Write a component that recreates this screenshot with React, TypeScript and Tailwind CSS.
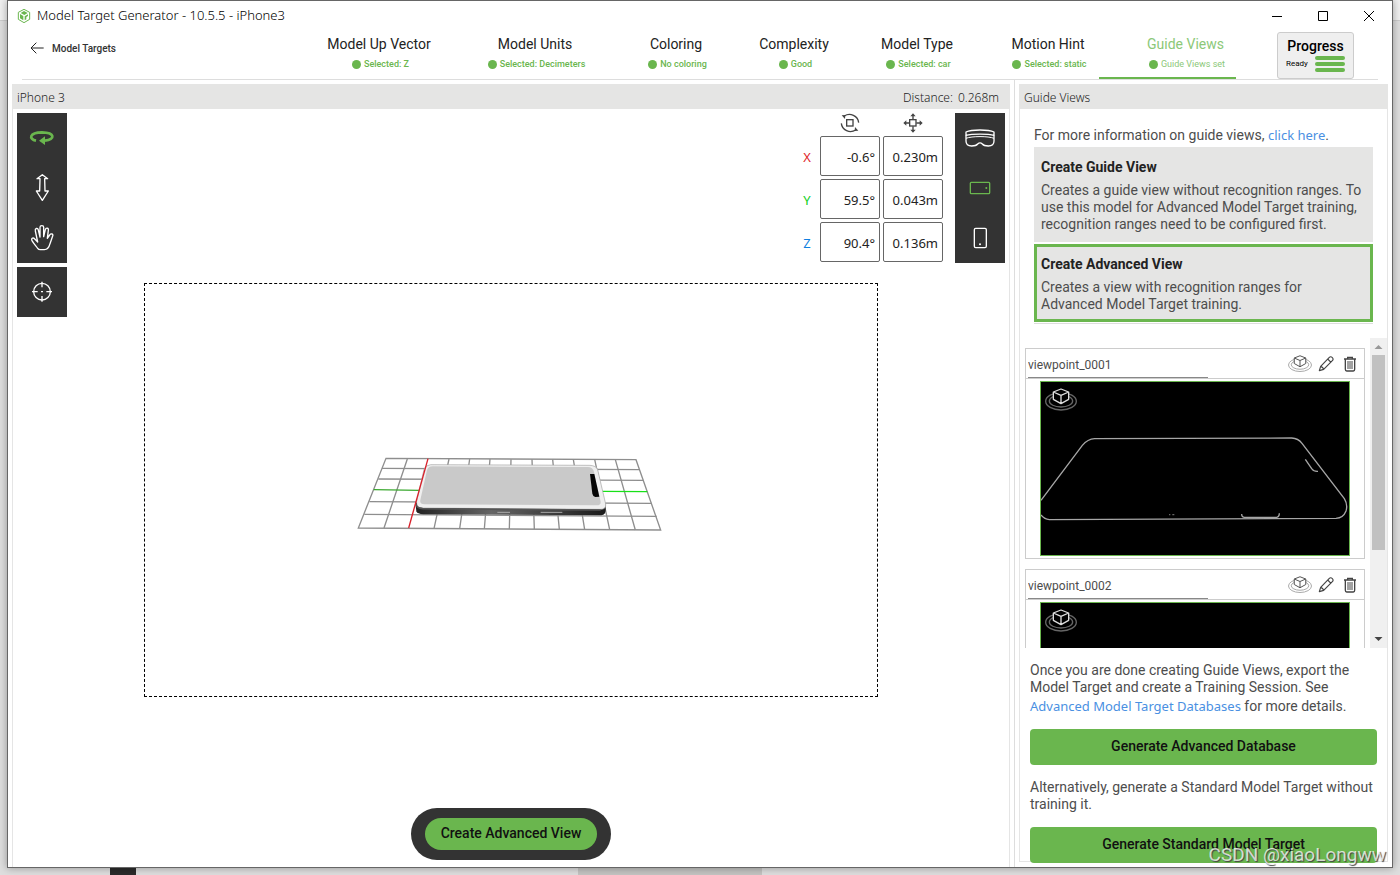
import React, { useState } from 'react';

type Tab = { label: string; status: string; className: string };

const tabs: Tab[] = [
  { label: 'Model Up Vector', status: 'Selected: Z', className: 'w-[180px]' },
  { label: 'Model Units', status: 'Selected: Decimeters', className: 'w-[132px]' },
  { label: 'Coloring', status: 'No coloring', className: 'w-[150px]' },
  { label: 'Complexity', status: 'Good', className: 'w-[86px]' },
  { label: 'Model Type', status: 'Selected: car', className: 'w-[160px]' },
  { label: 'Motion Hint', status: 'Selected: static', className: 'w-[102px]' },
  { label: 'Guide Views', status: 'Guide Views set', className: 'w-[137px] pl-9' },
];

const axes = [
  { name: 'X', color: 'text-[#e0262b]', rotation: '-0.6°', position: '0.230m' },
  { name: 'Y', color: 'text-[#12d01c]', rotation: '59.5°', position: '0.043m' },
  { name: 'Z', color: 'text-[#0f7fe0]', rotation: '90.4°', position: '0.136m' },
];

const LogoIcon = () => (
  <svg viewBox="0 0 48 48" className="size-4" aria-hidden="true">
    <path d="M24 4 L41 13 V34 L24 44 L7 34 V13 Z" fill="#fff" stroke="#6ab64e" strokeWidth="3" />
    <path d="M24 9 L35 15 L25 21 L14 15 Z M12 18 L22 24 V37 L12 31 Z" fill="#6ab64e" />
    <path d="M26 25 L36 19 V24 L31 27 V34 L26 37 Z" fill="#6ab64e" />
  </svg>
);

const OrbitIcon = () => (
  <svg viewBox="0 0 150 150" className="size-[50px]" fill="none" stroke="#6ab64e" strokeWidth="8" aria-hidden="true">
    <path d="M57 83 C35 78 36 59 75 58 C114 59 116 79 84 83" />
    <path d="M66 83 L84 70 V96 Z" fill="#6ab64e" stroke="none" />
  </svg>
);

const ElevateIcon = () => (
  <svg viewBox="0 0 150 150" className="size-[50px]" fill="none" stroke="#fff" strokeWidth="4" strokeLinejoin="round" aria-hidden="true">
    <path d="M76 35 L92 47 H83 L84 84 H94 L76 112 L58 84 H68 L69 47 H60 Z" />
  </svg>
);

const PanIcon = () => (
  <svg viewBox="0 0 150 150" className="size-[50px]" fill="none" stroke="#fff" strokeWidth="4" strokeLinejoin="round" aria-hidden="true">
    <path d="M62 106 C56 98 50 92 45 83 C41 75 50 72 54 79 L62 87 L55 54 C53 46 62 43 64 51 L69 72 L69 43 C69 36 80 36 80 43 L80 71 L85 50 C87 43 96 45 94 52 L91 76 L98 66 C102 60 110 63 107 69 L99 92 C96 104 92 110 82 110 H70 C66 110 64 109 62 106 Z" />
  </svg>
);

const TargetIcon = () => (
  <svg viewBox="0 0 150 150" className="size-[50px]" fill="none" stroke="#fff" strokeWidth="4" aria-hidden="true">
    <circle cx="75" cy="74" r="25" />
    <path d="M75 44 V61 M75 87 V104 M45 74 H62 M88 74 H105 M72 74 H78" />
  </svg>
);

const GogglesIcon = () => (
  <svg viewBox="0 0 150 150" className="size-[50px]" fill="none" stroke="#fff" strokeWidth="4" strokeLinejoin="round" aria-hidden="true">
    <path d="M33 57 C50 49 100 49 117 57 V67 C100 62 50 62 33 67 Z" />
    <path d="M33 67 V84 C33 94 38 99 50 99 C60 99 65 97 68 93 C72 89 78 89 82 93 C85 97 90 99 100 99 C112 99 117 94 117 84 V67" />
    <path d="M33 76 C50 69 100 69 117 76" strokeWidth="3" />
  </svg>
);

const LandscapeIcon = () => (
  <svg viewBox="0 0 150 150" className="size-[50px]" fill="none" stroke="#6ab64e" strokeWidth="4" aria-hidden="true">
    <rect x="46" y="58" width="58" height="34" rx="3" />
    <circle cx="94" cy="75" r="3" fill="#6ab64e" stroke="none" />
  </svg>
);

const PortraitIcon = () => (
  <svg viewBox="0 0 150 150" className="size-[50px]" fill="none" stroke="#fff" strokeWidth="4" aria-hidden="true">
    <rect x="58" y="46" width="36" height="58" rx="4" />
    <circle cx="75" cy="94" r="3" fill="#fff" stroke="none" />
  </svg>
);

const RotationIcon = () => (
  <svg viewBox="0 0 60 60" className="size-5" fill="none" stroke="#444" strokeWidth="4" aria-hidden="true">
    <rect x="20" y="20" width="19" height="19" />
    <path d="M13 9 C30 -2 54 8 56 29 M47 51 C30 62 6 52 4 31" />
    <path d="M5 7 L16 6 L15 18 Z M55 53 L44 54 L45 42 Z" fill="#444" stroke="none" />
  </svg>
);

const PositionIcon = () => (
  <svg viewBox="0 0 60 60" className="size-5" fill="none" stroke="#444" strokeWidth="4" aria-hidden="true">
    <rect x="20" y="20" width="19" height="19" />
    <path d="M30 8 V20 M30 40 V52 M8 30 H20 M40 30 H52" />
    <path d="M30 1 L38 10 H22 Z M30 59 L38 50 H22 Z M1 30 L10 22 V38 Z M59 30 L50 22 V38 Z" fill="#444" stroke="none" />
  </svg>
);

const GuideCubeIcon = ({ className, stroke, ring }: { className: string; stroke: string; ring: string }) => (
  <svg viewBox="0 0 96 68" className={className} fill="none" aria-hidden="true">
    <ellipse cx="48" cy="40" rx="46" ry="26" stroke={ring} strokeWidth="4" />
    <ellipse cx="48" cy="39" rx="35" ry="18" stroke={ring} strokeWidth="4" />
    <path d="M48 3 L71 12 V34 L48 47 L25 34 V12 Z" fill="var(--cube-fill)" />
    <path d="M48 3 L71 12 V34 L48 47 L25 34 V12 Z M25 12 L48 22 L71 12 M48 22 V47" stroke={stroke} strokeWidth="4" strokeLinejoin="round" />
  </svg>
);

const PencilIcon = () => (
  <svg viewBox="0 0 48 48" className="size-4" fill="none" stroke="#444" strokeWidth="3.5" strokeLinejoin="round" aria-hidden="true">
    <path d="M4 44 L8 31 L34 4 C37 1 41 2 43 5 C46 8 46 11 43 14 L17 40 Z M29 9 L39 19 M8 31 C12 32 16 36 17 40" />
  </svg>
);

const TrashIcon = () => (
  <svg viewBox="0 0 48 48" className="size-4" fill="none" stroke="#444" strokeWidth="4" aria-hidden="true">
    <path d="M6 9 H42 M10 9 V40 C10 43 11 45 14 45 H34 C37 45 38 43 38 40 V9 M17 8 V4 H31 V8" />
    <path d="M18 15 V39 M24 15 V39 M30 15 V39" strokeWidth="3" />
  </svg>
);

const PhoneModel = () => (
  <svg viewBox="3 -15 1020 330" className="w-[340px]" role="img" aria-label="iPhone 3 model">
    <defs>
      <linearGradient id="edge" x1="0" x2="1" y1="0" y2="0">
        <stop offset="0" stopColor="#222" />
        <stop offset="0.4" stopColor="#666" />
        <stop offset="1" stopColor="#1a1a1a" />
      </linearGradient>
    </defs>
    <g stroke="#8e8e8e" strokeWidth="4" fill="none">
      <path d="M138 55 L888 59 L962 270 L55 264 Z" />
      <path d="M126 85 L900 89 M115 117 L910 121 M88 185 L935 190 M73 223 L950 229" />
      <path d="M202 57 L132 264 M327 57 L282 266 M389 57 L359 266 M450 57 L433 267 M513 58 L508 267 M576 58 L583 268 M638 58 L658 268 M700 58 L734 269 M764 58 L809 269 M826 59 L886 270" />
    </g>
    <path d="M101 149 L240 151" stroke="#3aa82f" strokeWidth="4" />
    <path d="M786 154 L922 155" stroke="#18e018" strokeWidth="4" />
    <path d="M226 190 L229 214 Q232 222 250 223 L784 226 Q797 224 797 210 L796 190 Z" fill="url(#edge)" />
    <path d="M272 74 L750 76 Q768 77 773 89 L797 192 Q799 208 782 208 L248 204 Q226 204 229 188 L252 88 Q256 75 272 74 Z" fill="#efefef" stroke="#a5a5a5" strokeWidth="2" />
    <path d="M229 188 Q226 204 248 206 L782 210" fill="none" stroke="#555" strokeWidth="5" />
    <path d="M278 79 L744 81 Q757 82 761 92 L782 185 Q783 196 770 196 L254 193 Q238 192 241 180 L261 90 Q264 80 278 79 Z" fill="#c9c9c9" />
    <path d="M750 102 H763 L778 170 L766 171 Q759 170 757 161 Z" fill="#050505" />
    <path d="M472 217 H510 M602 217 H667" stroke="#aaa" strokeWidth="3" />
    <path d="M264 56 L206 264" stroke="#d8202a" strokeWidth="4" />
  </svg>
);

const PhoneOutline = () => (
  <svg viewBox="93 156 924 519" className="block w-full" fill="none" stroke="#a6a6a6" strokeWidth="4" aria-hidden="true">
    <path d="M93 511 L217 346 Q233 327 254 326 L845 324 Q865 325 876 340 L1003 506 Q1014 524 1008 543 Q1000 564 978 565 L118 569 Q102 567 93 555" />
    <path d="M886 388 L906 417 Q911 425 924 424 M695 552 Q695 562 704 562 L800 562 Q808 561 808 550" />
    <path d="M477 554 H481 M487 554 H493" stroke="#666" />
  </svg>
);

const ViewCard = ({ name }: { name: string }) => {
  const [value, setValue] = useState(name);

  return (
    <article className="shrink-0 border border-[#ccc] bg-white">
      <div className="flex h-[30px] items-center justify-between border-b border-[#ccc] pr-1.5 pl-0.5">
        <input
          aria-label="View name"
          value={value}
          onChange={e => setValue(e.target.value)}
          className="h-[29px] w-[180px] border-b border-[#888] pt-1 text-xs text-[#4d4d4d] outline-none"
        />
        <div className="flex items-center gap-2">
          <button aria-label="Show view" className="[--cube-fill:#fff]">
            <GuideCubeIcon className="w-6" stroke="#555" ring="#aaa" />
          </button>
          <button aria-label="Edit view" className="-ml-0.5"><PencilIcon /></button>
          <button aria-label="Delete view"><TrashIcon /></button>
        </div>
      </div>
      <div className="relative mx-3.5 mt-0.5 mb-0.5 border border-[#6ab64e] bg-black">
        <PhoneOutline />
        <div className="absolute top-1.5 left-1 [--cube-fill:#000]">
          <GuideCubeIcon className="w-8" stroke="#ddd" ring="#666" />
        </div>
      </div>
    </article>
  );
};

const TitleBar = () => (
  <header className="flex h-[29px] shrink-0 items-center pl-2">
    <LogoIcon />
    <h1 className="ml-[5px] font-['Noto_Sans',sans-serif] text-[13px] font-light text-black">Model Target Generator - 10.5.5 - iPhone3</h1>
    <div className="ml-auto flex h-full items-center">
      <button aria-label="Minimize" className="flex h-full w-[46px] items-center justify-center">
        <svg viewBox="0 0 10 10" className="size-2.5" stroke="#000"><path d="M0 5.5 H10" /></svg>
      </button>
      <button aria-label="Maximize" className="flex h-full w-[46px] items-center justify-center">
        <svg viewBox="0 0 10 10" className="size-2.5" stroke="#000" fill="none"><path d="M.5 .5 H9.500 V9.500 H.5 Z" /></svg>
      </button>
      <button aria-label="Close" className="flex h-full w-[46px] items-center justify-center">
        <svg viewBox="0 0 10 10" className="size-2.5" stroke="#000"><path d="M0 0 L10 10 M10 0 L0 10" /></svg>
      </button>
    </div>
  </header>
);

const StepBar = () => (
  <div className="mr-3.5 ml-3.5 flex h-[50px] shrink-0 items-stretch border-b border-[#ddd]">
    <button className="flex h-9 items-center gap-2 pl-2 text-[10px] font-medium text-[#333]">
      <svg viewBox="0 0 42 36" className="w-3.5" fill="none" stroke="#222" strokeWidth="3" aria-hidden="true">
        <path d="M41 18 H4 M19 2 L3 18 L19 34" />
      </svg>
      Model Targets
    </button>
    <nav className="ml-auto flex" aria-label="Steps">
      {tabs.map((tab, i) => {
        const active = i === tabs.length - 1;
        return (
          <button
            key={tab.label}
            className={`${tab.className} flex shrink-0 flex-col items-center border-b-2 pt-1 whitespace-nowrap ${active ? 'border-[#6ab64e]' : 'border-transparent'}`}
          >
            <span className={`text-sm leading-5 ${active ? 'text-[#8cc878]' : 'text-[#222]'}`}>{tab.label}</span>
            <span className={`mt-0.5 flex items-center gap-[3px] pl-[3px] text-[9px] leading-4 ${active ? 'text-[#8cc878]' : 'font-medium text-[#6ab64e]'}`}>
              <i className="size-[9px] rounded-full bg-[#6ab64e]" />
              {tab.status}
            </span>
          </button>
        );
      })}
    </nav>
    <button className="mr-6 ml-[41px] h-[47px] w-[77px] self-end rounded-[3px] border border-[#ccc] bg-[#efefef] px-2 pb-1 text-black">
      <span className="block text-sm leading-5 font-medium">Progress</span>
      <span className="flex items-center justify-between text-[8px]">
        Ready
        <span className="flex w-[30px] flex-col gap-0.5">
          <i className="h-1 rounded-full bg-[#6ab64e]" />
          <i className="h-1 rounded-full bg-[#6ab64e]" />
          <i className="h-1 rounded-full bg-[#6ab64e]" />
        </span>
      </span>
    </button>
  </div>
);

const Viewport = () => (
  <section className="mt-1 mr-1 ml-1 flex min-w-0 flex-1 flex-col">
    <div className="flex h-[25px] shrink-0 items-center justify-between bg-[#e5e5e4] pt-0.5 pr-[11px] pl-[5px] font-['Noto_Sans',sans-serif] text-xs font-light text-[#222]">
      <h2>iPhone 3</h2>
      <p className="flex gap-[5px]"><span>Distance:</span><span>0.268m</span></p>
    </div>
    <div className="relative flex flex-1 items-center border-x border-[#e5e5e5] pt-1">
      <div className="mx-[131px] flex aspect-[734/414] flex-1 items-center justify-center border border-dashed border-black">
        <PhoneModel />
      </div>

      <div className="absolute top-1 left-1 flex flex-col gap-1">
        <div className="flex flex-col bg-[#333]">
          <button aria-label="Orbit"><OrbitIcon /></button>
          <button aria-label="Elevate"><ElevateIcon /></button>
          <button aria-label="Pan"><PanIcon /></button>
        </div>
        <button aria-label="Center model" className="bg-[#333]"><TargetIcon /></button>
      </div>

      <div className="absolute top-1 right-1 flex items-start gap-3">
        <div className="grid grid-cols-[20px_60px_60px] items-center gap-[3px] font-['Noto_Sans',sans-serif] text-[13px]">
          <span />
          <span className="flex justify-center"><RotationIcon /></span>
          <span className="flex justify-center"><PositionIcon /></span>
          {axes.map(axis => (
            <React.Fragment key={axis.name}>
              <span className={`pt-1 text-center ${axis.color}`}>{axis.name}</span>
              <input
                aria-label={`${axis.name} rotation`}
                defaultValue={axis.rotation}
                className="h-10 w-full rounded-xs border border-[#666] bg-white px-1 pt-0.5 text-right text-[#222]"
              />
              <input
                aria-label={`${axis.name} position`}
                defaultValue={axis.position}
                className="h-10 w-full rounded-xs border border-[#666] bg-white px-1 pt-0.5 text-right text-[#222]"
              />
            </React.Fragment>
          ))}
        </div>
        <div className="flex flex-col bg-[#333]">
          <button aria-label="Headset"><GogglesIcon /></button>
          <button aria-label="Landscape device"><LandscapeIcon /></button>
          <button aria-label="Portrait device"><PortraitIcon /></button>
        </div>
      </div>

      <div className="absolute inset-x-0 bottom-[7px] flex justify-center">
        <div className="rounded-full bg-[#333] px-3.5 py-2.5">
          <button className="h-8 w-[172px] rounded-full bg-[#6ab64e] pb-0.5 text-sm font-medium text-[#111]">Create Advanced View</button>
        </div>
      </div>
    </div>
  </section>
);

const GuidePanel = () => (
  <aside className="flex w-[378px] shrink-0 flex-col border-l border-[#ddd] pt-1 pr-1 pb-[5px] pl-1">
    <h2 className="flex h-[25px] shrink-0 items-center bg-[#e5e5e4] pt-0.5 pl-[5px] font-['Noto_Sans',sans-serif] text-xs font-light text-[#222]">Guide Views</h2>
    <div className="flex min-h-0 flex-1 flex-col border-x border-b border-[#e5e5e5] text-sm leading-[17px] text-[#4d4d4d]">
      <div className="mr-3.5 ml-3.5 pt-4">
        <p className="pb-0.5 leading-5">
          For more information on guide views,{' '}
          <a href="#guide-views" className="font-['Noto_Sans',sans-serif] text-[13px] text-[#4a90e2]">click here</a>.
        </p>
        <div className="flex flex-col gap-0.5 border-b border-[#ddd] pb-px">
          <button className="border-3 border-[#e5e5e4] bg-[#e5e5e4] px-1 pt-[7px] pb-1.5 text-left">
            <b className="mb-[5px] block leading-5 text-[#222]">Create Guide View</b>
            Creates a guide view without recognition ranges. To use this model for Advanced Model Target training, recognition ranges need to be configured first.
          </button>
          <button className="border-3 border-[#6ab64e] bg-[#e5e5e4] px-1 pt-[7px] pb-1.5 text-left">
            <b className="mb-[5px] block leading-5 text-[#222]">Create Advanced View</b>
            <span className="block max-w-[280px]">Creates a view with recognition ranges for Advanced Model Target training.</span>
          </button>
        </div>
      </div>

      <div className="mt-3.5 flex min-h-0 flex-1">
        <div className="flex flex-1 flex-col gap-2.5 overflow-hidden pt-2.5 pr-[5px] pl-[5px]">
          <ViewCard name="viewpoint_0001" />
          <ViewCard name="viewpoint_0002" />
        </div>
        <div className="flex w-[17px] flex-col items-center bg-[#f0f0f0]">
          <svg viewBox="0 0 17 17" className="size-[17px] shrink-0" fill="#999"><path d="M4.500 11 L8.500 7 L12.500 11 Z" /></svg>
          <div className="h-[63%] w-[13px] bg-[#c1c1c1]" />
          <svg viewBox="0 0 17 17" className="mt-auto size-[17px] shrink-0" fill="#444"><path d="M4.500 6 L8.500 10 L12.500 6 Z" /></svg>
        </div>
      </div>

      <div className="flex shrink-0 flex-col pt-3.5 pr-2.5 pl-2.5">
        <p>
          Once you are done creating Guide Views, export the Model Target and create a Training Session. See{' '}
          <a href="#databases" className="font-['Noto_Sans',sans-serif] text-[13px] leading-5 text-[#4a90e2]">Advanced Model Target Databases</a> for more details.
        </p>
        <button className="mt-[13px] h-9 rounded bg-[#6ab64e] pb-0.5 font-medium text-[#111]">Generate Advanced Database</button>
        <p className="my-3.5">Alternatively, generate a Standard Model Target without training it.</p>
        <button className="-mb-0.5 h-9 rounded bg-[#6ab64e] pb-0.5 font-medium text-[#111]">Generate Standard Model Target</button>
      </div>
    </div>
  </aside>
);

const App: React.FC = () => (
  <div className="relative flex h-screen flex-col overflow-hidden bg-[#dedede] px-[7px] font-['Roboto',sans-serif]">
    <div className="absolute top-0 left-0 h-[21px] w-full border-b border-[#ccc] bg-[#f0f0f0]" />
    <div className="relative flex min-h-0 flex-1 flex-col border border-[#666] bg-white shadow-[0_0_8px_rgba(0,0,0,0.35)]">
      <TitleBar />
      <StepBar />
      <main className="flex min-h-0 flex-1">
        <Viewport />
        <GuidePanel />
      </main>
    </div>
    <div className="flex h-[7px] shrink-0 pl-[103px]">
      <div className="w-[26px] bg-[#2b2b2b]" />
      <div className="ml-[442px] w-[184px] bg-[#c4c4c2]" />
    </div>
    <p className="absolute right-3.5 bottom-2 text-[19px] leading-6 text-white/75 [text-shadow:1px_1px_1px_#444]">CSDN @xiaoLongww</p>
  </div>
);

export default App;
